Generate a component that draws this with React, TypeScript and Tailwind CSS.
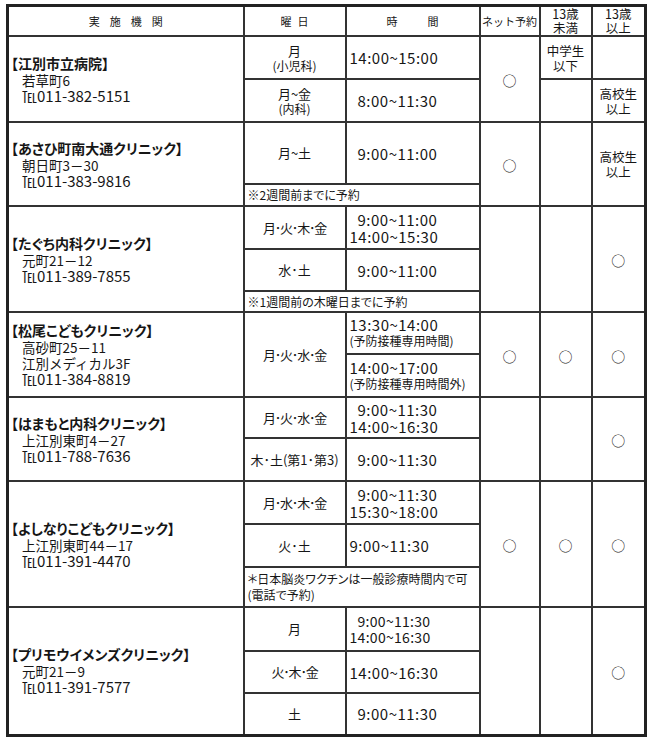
import type { ReactNode } from "react";

const cell = "border-2 border-[#333] p-0";

type Sub = {
  h: number;
  day?: ReactNode;
  daySpan?: number;
  time?: ReactNode;
  note?: ReactNode;
  u13?: ReactNode;
  o13?: ReactNode;
};

type Clinic = {
  name: string;
  addr: string[];
  tel: string;
  subs: Sub[];
  net?: ReactNode;
  u13?: ReactNode;
  o13?: ReactNode;
  perRowAges?: boolean;
};

const maru = <span className="text-[14px]">○</span>;

function Time({ lines, small }: { lines: [string, boolean?][]; small?: boolean }) {
  return (
    <div
      className={
        small
          ? "text-[14px] leading-[16px] tracking-[0.3px]"
          : "text-[15px] leading-[17px] tracking-[0.5px]"
      }
    >
      {lines.map(([t, ind]) => (
        <div key={t} className={ind ? "pl-[8px]" : ""}>
          {t}
        </div>
      ))}
    </div>
  );
}

function Twin({ top, sub }: { top: string; sub: string }) {
  return (
    <div className="leading-[15px]">
      <div className="text-[13px]">{top}</div>
      <div className="text-[12px]">{sub}</div>
    </div>
  );
}

function Stack({ a, b }: { a: string; b: string }) {
  return (
    <div className="text-[12.5px] leading-[15px]">
      <div>{a}</div>
      <div>{b}</div>
    </div>
  );
}

function Days({ t }: { t: string }) {
  return <span className="tracking-[-1.2px]">{t}</span>;
}

const clinics: Clinic[] = [
  {
    name: "【江別市立病院】",
    addr: ["若草町6"],
    tel: "℡011-382-5151",
    perRowAges: true,
    net: maru,
    subs: [
      {
        h: 43,
        day: <Twin top="月" sub="(小児科)" />,
        time: <Time lines={[["14:00~15:00"]]} />,
        u13: <Stack a="中学生" b="以下" />,
      },
      {
        h: 43,
        day: <Twin top="月~金" sub="(内科)" />,
        time: <Time lines={[["8:00~11:30", true]]} />,
        o13: <Stack a="高校生" b="以上" />,
      },
    ],
  },
  {
    name: "【あさひ町南大通クリニック】",
    addr: ["朝日町3－30"],
    tel: "℡011-383-9816",
    net: maru,
    o13: <Stack a="高校生" b="以上" />,
    subs: [
      { h: 62, day: "月~土", time: <Time lines={[["9:00~11:00", true]]} /> },
      { h: 22, note: "※2週間前までに予約" },
    ],
  },
  {
    name: "【たぐち内科クリニック】",
    addr: ["元町21－12"],
    tel: "℡011-389-7855",
    o13: maru,
    subs: [
      {
        h: 43,
        day: <Days t="月･火･木･金" />,
        time: <Time lines={[["9:00~11:00", true], ["14:00~15:30"]]} />,
      },
      { h: 42, day: "水･土", time: <Time lines={[["9:00~11:00", true]]} /> },
      { h: 21, note: "※1週間前の木曜日までに予約" },
    ],
  },
  {
    name: "【松尾こどもクリニック】",
    addr: ["高砂町25－11", "江別メディカル3F"],
    tel: "℡011-384-8819",
    net: maru,
    u13: maru,
    o13: maru,
    subs: [
      {
        h: 42,
        day: <Days t="月･火･水･金" />,
        daySpan: 2,
        time: (
          <div className="leading-[16px]">
            <div className="text-[15px] tracking-[0.5px]">13:30~14:00</div>
            <div className="text-[12px]">(予防接種専用時間)</div>
          </div>
        ),
      },
      {
        h: 43,
        time: (
          <div className="leading-[16px]">
            <div className="text-[15px] tracking-[0.5px]">14:00~17:00</div>
            <div className="text-[12px]">(予防接種専用時間外)</div>
          </div>
        ),
      },
    ],
  },
  {
    name: "【はまもと内科クリニック】",
    addr: ["上江別東町4－27"],
    tel: "℡011-788-7636",
    o13: maru,
    subs: [
      {
        h: 41,
        day: <Days t="月･火･水･金" />,
        time: <Time lines={[["9:00~11:30", true], ["14:00~16:30"]]} />,
      },
      { h: 43, day: "木･土(第1･第3)", time: <Time lines={[["9:00~11:30", true]]} /> },
    ],
  },
  {
    name: "【よしなりこどもクリニック】",
    addr: ["上江別東町44－17"],
    tel: "℡011-391-4470",
    net: maru,
    u13: maru,
    o13: maru,
    subs: [
      {
        h: 43,
        day: <Days t="月･水･木･金" />,
        time: <Time lines={[["9:00~11:30", true], ["15:30~18:00"]]} />,
      },
      { h: 43, day: "火･土", time: <Time lines={[["9:00~11:30"]]} /> },
      {
        h: 40,
        note: (
          <div className="leading-[16px]">
            <div>＊日本脳炎ワクチンは一般診療時間内で可</div>
            <div>(電話で予約)</div>
          </div>
        ),
      },
    ],
  },
  {
    name: "【プリモウイメンズクリニック】",
    addr: ["元町21－9"],
    tel: "℡011-391-7577",
    o13: maru,
    subs: [
      {
        h: 44,
        day: "月",
        time: <Time small lines={[["9:00~11:30", true], ["14:00~16:30"]]} />,
      },
      { h: 42, day: <Days t="火･木･金" />, time: <Time lines={[["14:00~16:30"]]} /> },
      { h: 42, day: "土", time: <Time lines={[["9:00~11:30", true]]} /> },
    ],
  },
];

function ClinicRows({ c }: { c: Clinic }) {
  const n = c.subs.length;
  let dayCovered = 0;
  return (
    <>
      {c.subs.map((s, i) => {
        const showDay = dayCovered === 0;
        if (s.daySpan) dayCovered = s.daySpan - 1;
        else if (!showDay) dayCovered -= 1;
        return (
          <tr key={i} style={{ height: s.h }}>
            {i === 0 && (
              <td rowSpan={n} className={`${cell} pl-[2px] align-middle`}>
                <div className="text-[14px] font-bold leading-[17px] [font-feature-settings:'palt']">
                  {c.name}
                </div>
                {c.addr.map((a) => (
                  <div key={a} className="pl-[11px] text-[13.5px] leading-[16px]">
                    {a}
                  </div>
                ))}
                <div className="pl-[11px] text-[15px] leading-[16px]">{c.tel}</div>
              </td>
            )}
            {s.note ? (
              <td
                colSpan={2}
                className={`${cell} pl-[3px] align-middle text-[12px] [font-feature-settings:'palt']`}
              >
                {s.note}
              </td>
            ) : (
              <>
                {(showDay || s.daySpan) && s.day !== undefined && (
                  <td
                    rowSpan={s.daySpan}
                    className={`${cell} text-center align-middle text-[13px]`}
                  >
                    {s.day}
                  </td>
                )}
                <td className={`${cell} pl-[3px] align-middle`}>{s.time}</td>
              </>
            )}
            {i === 0 && (
              <td rowSpan={n} className={`${cell} text-center align-middle`}>
                {c.net}
              </td>
            )}
            {c.perRowAges ? (
              <>
                <td className={`${cell} text-center align-middle`}>{s.u13}</td>
                <td className={`${cell} text-center align-middle`}>{s.o13}</td>
              </>
            ) : (
              i === 0 && (
                <>
                  <td rowSpan={n} className={`${cell} text-center align-middle`}>
                    {c.u13}
                  </td>
                  <td rowSpan={n} className={`${cell} text-center align-middle`}>
                    {c.o13}
                  </td>
                </>
              )
            )}
          </tr>
        );
      })}
    </>
  );
}

export default function App() {
  return (
    <div className="min-h-[741px] bg-white pl-[6px] pt-[4px] font-['Noto_Sans_CJK_JP',sans-serif] text-[#161616]">
      <table className="w-[638px] table-fixed border-collapse border-[3px] border-[#222]">
        <colgroup>
          <col className="w-[236px]" />
          <col className="w-[102px]" />
          <col className="w-[134px]" />
          <col className="w-[60px]" />
          <col className="w-[52px]" />
          <col className="w-[54px]" />
        </colgroup>
        <thead>
          <tr className="h-[30px]">
            <th className={`${cell} text-[11px] font-normal tracking-[10px]`}>
              <span className="pl-[10px]">実施機関</span>
            </th>
            <th className={`${cell} text-[11px] font-normal tracking-[6px]`}>
              <span className="pl-[6px]">曜日</span>
            </th>
            <th className={`${cell} text-[11px] font-normal`}>
              <div className="flex justify-center gap-[30px]">
                <span>時</span>
                <span>間</span>
              </div>
            </th>
            <th className={`${cell} text-[11px] font-normal`}>ネット予約</th>
            <th className={`${cell} text-[12.5px] font-normal leading-[14px]`}>
              <div>13歳</div>
              <div>未満</div>
            </th>
            <th className={`${cell} text-[12.5px] font-normal leading-[14px]`}>
              <div>13歳</div>
              <div>以上</div>
            </th>
          </tr>
        </thead>
        <tbody>
          {clinics.map((c) => (
            <ClinicRows key={c.name} c={c} />
          ))}
        </tbody>
      </table>
    </div>
  );
}
